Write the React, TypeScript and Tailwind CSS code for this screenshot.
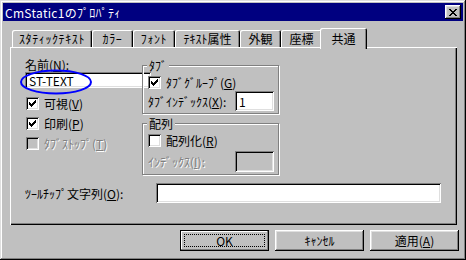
import type { ReactNode } from "react";

const raised =
  "shadow-[inset_-1px_-1px_#000,inset_1px_1px_#fff,inset_-2px_-2px_#808080,inset_2px_2px_#dfdfdf]";
const sunken =
  "shadow-[inset_1px_1px_#808080,inset_-1px_-1px_#fff,inset_2px_2px_#000,inset_-2px_-2px_#dfdfdf]";
const disabledText = "text-[#808080] [text-shadow:1px_1px_0_#fff]";

const tabs = [
  { label: "ｽﾀﾃｨｯｸﾃｷｽﾄ", w: "w-[80px] tracking-[0.6px]" },
  { label: "ｶﾗｰ", w: "w-[41px] tracking-[0.6px]" },
  { label: "ﾌｫﾝﾄ", w: "w-[42px] tracking-[0.6px]" },
  { label: "ﾃｷｽﾄ属性", w: "w-[65px]" },
  { label: "外観", w: "w-[41px]" },
  { label: "座標", w: "w-[41px]" },
];

function Mn({ children }: { children: ReactNode }) {
  return <span className="underline underline-offset-[1px]">{children}</span>;
}

function Check({ checked, disabled }: { checked?: boolean; disabled?: boolean }) {
  return (
    <span
      className={`relative block h-[13px] w-[13px] shrink-0 ${sunken} ${disabled ? "bg-[#c0c0c0]" : "bg-white"}`}
    >
      {checked ? (
        <svg className="absolute left-[3px] top-[3px]" width="7" height="7" viewBox="0 0 7 7" shapeRendering="crispEdges">
          <path
            d="M0 2h1v3H0z M1 3h1v3H1z M2 4h1v3H2z M3 3h1v3H3z M4 2h1v3H4z M5 1h1v3H5z M6 0h1v3H6z"
            fill="#000"
          />
        </svg>
      ) : null}
    </span>
  );
}

function CheckRow({
  checked,
  disabled,
  children,
}: {
  checked?: boolean;
  disabled?: boolean;
  children: ReactNode;
}) {
  return (
    <div className="flex h-[13px] items-center gap-[5px]">
      <Check checked={checked} disabled={disabled} />
      <span className={disabled ? disabledText : ""}>{children}</span>
    </div>
  );
}

function Group({ title, className, children }: { title: string; className: string; children: ReactNode }) {
  return (
    <div
      className={`relative border border-[#808080] shadow-[1px_1px_0_#fff,inset_1px_1px_0_#fff] ${className}`}
    >
      <span className="absolute left-[4px] top-[-7px] bg-[#c0c0c0] px-[2px] leading-[13px]">{title}</span>
      {children}
    </div>
  );
}

function Button({ children, primary }: { children: ReactNode; primary?: boolean }) {
  return (
    <div
      className={`flex h-[21px] w-[89px] items-center justify-center ${
        primary
          ? "border border-black shadow-[inset_-1px_-1px_#808080,inset_1px_1px_#fff]"
          : raised
      }`}
    >
      {primary ? (
        <span className="flex h-[13px] w-[81px] items-center justify-center border border-dotted border-black">
          {children}
        </span>
      ) : (
        children
      )}
    </div>
  );
}

export default function App() {
  return (
    <div
      className={`relative flex h-[260px] w-[466px] flex-col overflow-hidden bg-[#c0c0c0] p-[3px] font-['Noto_Sans_CJK_JP',sans-serif] text-[12px] leading-[13px] text-black shadow-[inset_-1px_-1px_#000,inset_1px_1px_#dfdfdf,inset_-2px_-2px_#808080,inset_2px_2px_#fff]`}
    >
      {/* caption */}
      <div className="flex h-[18px] items-center justify-between bg-[#000080] pl-[2px] pr-[2px] text-white">
        <span className="tracking-[0.3px]">CmStatic1のﾌﾟﾛﾊﾟﾃｨ</span>
        <div className={`flex h-[14px] w-[16px] items-center justify-center bg-[#c0c0c0] ${raised}`}>
          <svg width="8" height="7" viewBox="0 0 8 7" shapeRendering="crispEdges">
            <path
              d="M0 0h2v1H0z M6 0h2v1H6z M1 1h2v1H1z M5 1h2v1H5z M2 2h4v1H2z M3 3h2v1H3z M2 4h4v1H2z M1 5h2v1H1z M5 5h2v1H5z M0 6h2v1H0z M6 6h2v1H6z"
              fill="#000"
            />
          </svg>
        </div>
      </div>

      {/* tabs */}
      <div className="ml-[7px] mt-[7px] flex h-[19px] items-start pl-[2px]">
        {tabs.map((t) => (
          <div
            key={t.label}
            className={`mt-[2px] flex h-[17px] items-center justify-center rounded-t-[2px] shadow-[inset_1px_1px_#fff,inset_-1px_0_#000,inset_-2px_0_#808080] ${t.w}`}
          >
            {t.label}
          </div>
        ))}
        <div className="relative z-10 -mx-[2px] flex h-[21px] w-[47px] items-start justify-center rounded-t-[2px] bg-[#c0c0c0] pt-[4px] shadow-[inset_1px_1px_#fff,inset_-1px_0_#000,inset_-2px_0_#808080]">
          共通
        </div>
      </div>

      {/* page */}
      <div
        className={`ml-[7px] flex h-[178px] w-[447px] flex-col shadow-[inset_1px_1px_#fff,inset_-1px_-1px_#000,inset_-2px_-2px_#808080]`}
      >
        <div className="flex">
          <div className="flex w-[132px] flex-col pl-[15px] pt-[12px]">
            <span className="h-[13px] leading-[12px]">
              名前(<Mn>N</Mn>):
            </span>
            <div className={`flex h-[16px] w-[126px] items-center bg-white pl-[4px] ${sunken}`}>ST-TEXT</div>
            <div className="mt-[9px] flex flex-col gap-[7px] pl-[1px]">
              <CheckRow checked>
                可視(<Mn>V</Mn>)
              </CheckRow>
              <CheckRow checked>
                印刷(<Mn>P</Mn>)
              </CheckRow>
              <CheckRow disabled>
                ﾀﾌﾞｽﾄｯﾌﾟ(<Mn>T</Mn>)
              </CheckRow>
            </div>
          </div>

          <div className="flex w-[137px] flex-col pt-[18px]">
            <Group title="ﾀﾌﾞ" className="h-[49px] pl-[5px] pt-[10px]">
              <CheckRow checked>
                ﾀﾌﾞｸﾞﾙｰﾌﾟ(<Mn>G</Mn>)
              </CheckRow>
              <div className="mt-[2px] flex items-center justify-between pr-[4px]">
                <span>
                  ﾀﾌﾞｲﾝﾃﾞｯｸｽ(<Mn>X</Mn>):
                </span>
                <div className={`flex h-[20px] w-[39px] items-center bg-white pl-[4px] ${sunken}`}>1</div>
              </div>
            </Group>
            <Group title="配列" className="mt-[9px] h-[52px] pl-[5px] pt-[10px]">
              <CheckRow>
                配列化(<Mn>R</Mn>)
              </CheckRow>
              <div className="mt-[4px] flex items-center justify-between pr-[4px]">
                <span className={disabledText}>
                  ｲﾝﾃﾞｯｸｽ(<Mn>I</Mn>):
                </span>
                <div className={`h-[21px] w-[39px] bg-[#c0c0c0] ${sunken}`} />
              </div>
            </Group>
          </div>
        </div>

        <div className="mt-[8px] flex items-center pl-[15px]">
          <span className="w-[131px]">
            ﾂｰﾙﾁｯﾌﾟ文字列(<Mn>O</Mn>):
          </span>
          <div className={`h-[20px] w-[285px] bg-white ${sunken}`} />
        </div>
      </div>

      {/* buttons */}
      <div className="ml-[177px] mt-[5px] flex gap-[6px]">
        <Button primary>OK</Button>
        <Button>ｷｬﾝｾﾙ</Button>
        <Button>
          適用(<Mn>A</Mn>)
        </Button>
      </div>

      {/* hand-drawn highlight */}
      <svg className="pointer-events-none absolute left-[19px] top-[69px]" width="74" height="26" viewBox="0 0 74 26">
        <ellipse cx="37" cy="13" rx="35" ry="11.5" fill="none" stroke="#0000ff" strokeWidth="2" />
      </svg>
    </div>
  );
}
